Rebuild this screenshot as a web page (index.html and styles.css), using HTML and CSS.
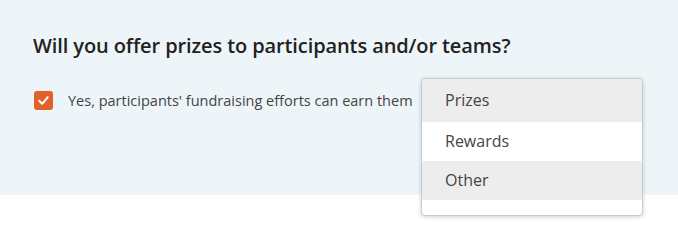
FILE: index.html
```html
<!DOCTYPE html>
<html lang="en">
	<head>
		<meta charset="UTF-8" />
		<meta name="viewport" content="width=device-width, initial-scale=1.0" />
		<title>Prizes</title>
		<link rel="stylesheet" href="styles.css">
	</head>
	<body>
		<div class="panel">
			<h2 class="question">Will you offer prizes to participants and/or teams?</h2>
			<div class="option-row">
				<label class="check">
					<span class="box">
						<svg width="13" height="13" viewBox="0 0 13 13">
							<path d="M2.2 6.8 L5.2 9.8 L10.8 3.2" fill="none" stroke="#fff" stroke-width="2" stroke-linecap="round" stroke-linejoin="round" />
						</svg>
					</span>
					<span class="check-text">Yes, participants' fundraising efforts can earn them</span>
				</label>
				<ul class="menu">
					<li class="menu-item shaded first">Prizes</li>
					<li class="menu-item">Rewards</li>
					<li class="menu-item shaded">Other</li>
				</ul>
			</div>
		</div>
		<div class="below"></div>
	</body>
</html>
```

FILE: styles.css
```css
body {
	margin: 0;
	font-family: "Open Sans", Arial, sans-serif;
	background-color: #fff;
}

.panel {
	background-color: #eef5f8;
	height: 195px;
	padding: 33px 0 0 33px;
	box-sizing: border-box;
}

.below {
	height: 47px;
}

.question {
	margin: 0;
	font-size: 20px;
	font-weight: 600;
	color: #222;
	line-height: 26px;
	letter-spacing: -0.1px;
}

.option-row {
	position: relative;
	margin-top: 32px;
}

.check {
	display: flex;
	align-items: center;
	gap: 15px;
}

.check .box {
	display: flex;
	justify-content: center;
	align-items: center;
	width: 19px;
	height: 19px;
	border-radius: 3px;
	background-color: #e0622a;
	margin-left: 1px;
}

.check-text {
	font-size: 14.5px;
	color: #444;
}

.menu {
	position: absolute;
	left: 388px;
	top: -13px;
	width: 222px;
	margin: 0;
	padding: 0 0 15px 0;
	list-style: none;
	background-color: #fff;
	border: 1px solid #c8ccd0;
	border-radius: 4px;
	box-shadow: 0 1px 4px rgba(0, 0, 0, 0.18);
	box-sizing: border-box;
	z-index: 2;
}

.menu-item {
	height: 39px;
	line-height: 39px;
	padding-left: 23px;
	font-size: 16px;
	color: #444;
}

.menu-item.first {
	height: 43px;
	line-height: 43px;
	border-radius: 3px 3px 0 0;
}

.menu-item.shaded {
	background-color: #ededed;
}
```
